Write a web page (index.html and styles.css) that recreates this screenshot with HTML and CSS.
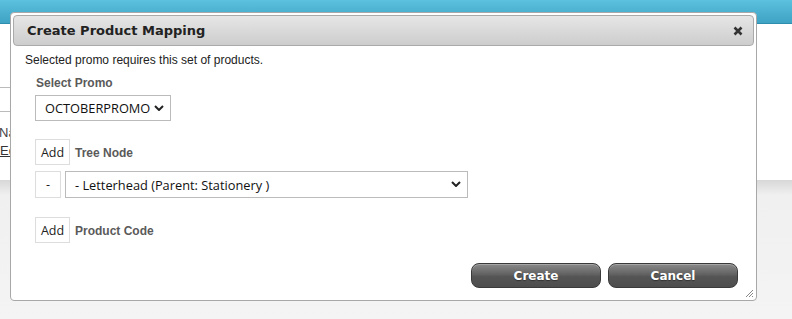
FILE: index.html
```html
<!DOCTYPE html>
<html lang="en">
<head>
    <meta charset="UTF-8">
    <title>Create Product Mapping</title>
    <link rel="stylesheet" href="styles.css">
</head>
<body>
    <div class="topbar"></div>
    <div class="page">
        <div class="page-select">
            <svg class="page-check" width="8" height="6" viewBox="0 0 8 6"><path d="M1 1.5 L4 4.5 L7 1.5" fill="none" stroke="#222" stroke-width="1.8"/></svg>
        </div>
        <div class="page-label">Name</div>
        <a class="page-link" href="#">Edit</a>
    </div>
    <div class="ground"></div>

    <div class="dialog">
        <div class="titlebar">
            <span class="title">Create Product Mapping</span>
            <button class="close" title="close">
                <svg width="10" height="10" viewBox="0 0 10 10"><path d="M1.5 1.5 L8.5 8.5 M8.5 1.5 L1.5 8.5" stroke="#333" stroke-width="2.6"/></svg>
            </button>
        </div>
        <div class="dialog-body">
            <p class="note">Selected promo requires this set of products.</p>
            <div class="form">
                <div class="label">Select Promo</div>
                <div class="select-wrap promo">
                    <select><option>OCTOBERPROMO</option></select>
                    <svg class="chev" width="10" height="6" viewBox="0 0 10 6"><path d="M1 1 L5 5 L9 1" fill="none" stroke="#222" stroke-width="2"/></svg>
                </div>

                <div class="row add-row">
                    <button class="mini">Add</button>
                    <span class="label">Tree Node</span>
                </div>
                <div class="row node-row">
                    <button class="mini minus">-</button>
                    <div class="select-wrap node">
                        <select><option>- Letterhead (Parent: Stationery )</option></select>
                        <svg class="chev" width="10" height="6" viewBox="0 0 10 6"><path d="M1 1 L5 5 L9 1" fill="none" stroke="#222" stroke-width="2"/></svg>
                    </div>
                </div>

                <div class="row add-row last">
                    <button class="mini">Add</button>
                    <span class="label">Product Code</span>
                </div>
            </div>
            <div class="actions">
                <button class="btn">Create</button>
                <button class="btn">Cancel</button>
            </div>
        </div>
        <svg class="grip" width="10" height="10" viewBox="0 0 10 10"><path d="M9 2 L2 9 M9 5 L5 9 M9 8 L8 9" stroke="#888" stroke-width="1"/></svg>
    </div>
</body>
</html>
```

FILE: styles.css
```css
body {
    margin: 0;
    font-family: "Liberation Sans", Arial, sans-serif;
    font-size: 12px;
    color: #222;
    background-color: #f3f3f3;
}

.topbar {
    height: 23px;
    background: linear-gradient(#5cc1de, #3ea3c4);
    border-bottom: 1px solid #2f8eae;
}

.page {
    height: 157px;
    background-color: white;
    border-bottom: 1px solid #d8d8d8;
    padding-top: 63px;
    box-sizing: border-box;
}

.page-select {
    width: 110px;
    height: 25px;
    margin-left: -100px;
    border-top: 1px solid #bbb;
    border-bottom: 1px solid #bbb;
    box-sizing: border-box;
    display: flex;
    align-items: center;
    justify-content: flex-end;
    padding-right: 1px;
}

.page-check {
    margin-right: 93px;
}

.page-label {
    margin-top: 13px;
    margin-left: -1px;
    font-size: 13px;
    color: #444;
}

.page-link {
    display: block;
    margin-top: 3px;
    font-size: 13px;
    color: #333;
}

.ground {
    height: 138px;
    background: linear-gradient(#d9d9d9, #f0f0f0 14px, #f4f4f4);
}

.dialog {
    position: absolute;
    left: 10px;
    top: 12px;
    width: 747px;
    box-sizing: border-box;
    padding: 2px;
    background-color: white;
    border: 1px solid #a8a8a8;
    border-radius: 4px;
}

.titlebar {
    height: 31px;
    box-sizing: border-box;
    display: flex;
    align-items: center;
    justify-content: space-between;
    padding: 0 10px 0 13px;
    background: linear-gradient(#e6e6e6, #cdcdcd);
    border: 1px solid #aaa;
    border-radius: 4px;
}

.title {
    font-family: "DejaVu Sans", Verdana, sans-serif;
    font-weight: bold;
    font-size: 13px;
    color: #222;
}

.close {
    border: 0;
    background: none;
    padding: 0;
    width: 10px;
    height: 10px;
    display: flex;
}

.dialog-body {
    padding: 6px 12px 10px 12px;
}

.note {
    margin: 0;
    line-height: 16px;
}

.form {
    margin-left: 10px;
}

.label {
    font-weight: bold;
    color: #5a5a5a;
    line-height: 16px;
    margin-top: 7px;
    margin-left: 1px;
}

.select-wrap {
    position: relative;
    height: 26px;
}

.select-wrap select {
    appearance: none;
    width: 100%;
    height: 100%;
    border: 1px solid #bbb;
    background: white;
    font-family: "Open Sans", sans-serif;
    font-size: 12.8px;
    color: #111;
    padding: 0 0 0 9px;
    margin: 0;
}

.chev {
    position: absolute;
    right: 7px;
    top: 10px;
    pointer-events: none;
}

.promo {
    width: 136px;
    margin-top: 4px;
}

.row {
    display: flex;
    align-items: center;
    gap: 4px;
}

.add-row {
    margin-top: 18px;
}

.add-row.last {
    margin-top: 19px;
}

.add-row .label {
    margin: 2px 0 0 1px;
}

.node-row {
    margin-top: 6px;
}

.node {
    width: 403px;
    height: 27px;
}

.mini {
    height: 26px;
    width: 35px;
    padding: 0;
    border: 1px solid #ddd;
    background: white;
    font-family: "Open Sans", sans-serif;
    font-size: 12.5px;
    color: #222;
}

.minus {
    width: 26px;
    height: 27px;
}

.actions {
    display: flex;
    justify-content: flex-end;
    gap: 7px;
    margin-top: 20px;
    padding-right: 4px;
}

.btn {
    width: 130px;
    height: 25px;
    padding: 0;
    border: 1px solid #3a3a3a;
    border-radius: 8px;
    background: linear-gradient(#8a8a8a, #626262 45%, #555 55%, #4d4d4d);
    box-shadow: inset 0 1px 0 rgba(255, 255, 255, 0.25);
    font-family: "DejaVu Sans", Verdana, sans-serif;
    font-weight: bold;
    font-size: 12px;
    color: white;
    text-shadow: 0 1px 1px rgba(0, 0, 0, 0.4);
}

.grip {
    position: absolute;
    right: 2px;
    bottom: 2px;
}
```
